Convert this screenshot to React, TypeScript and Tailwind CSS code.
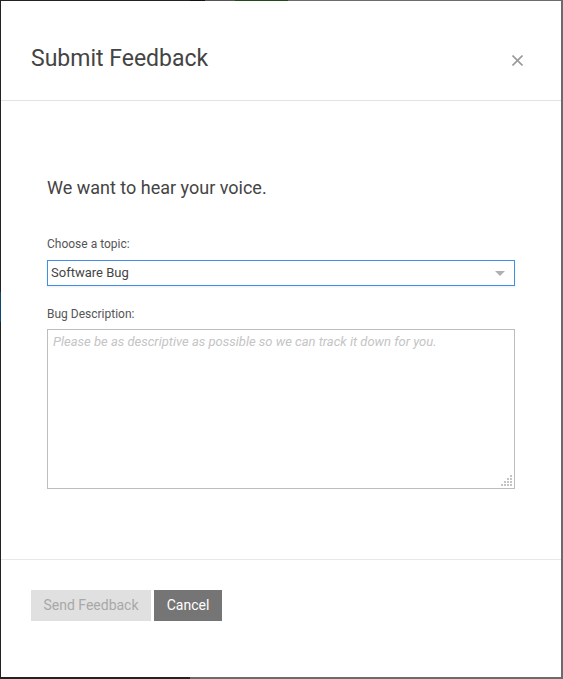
import React from "react";

function Grip() {
  const dots: [number, number][] = [];
  for (let r = 0; r < 4; r++) {
    for (let c = 3 - r; c < 4; c++) {
      dots.push([c * 3, r * 3]);
    }
  }
  return (
    <svg className="absolute right-[2px] bottom-[2px]" width="12" height="12" viewBox="0 0 12 12">
      {dots.map(([x, y], i) => (
        <rect key={i} x={x} y={y} width="2" height="2" fill="#c4c4c4" />
      ))}
    </svg>
  );
}

export default function App() {
  return (
    <div
      className="relative w-[563px] h-[679px] overflow-hidden"
      style={{ fontFamily: "Roboto, 'Noto Sans', sans-serif" }}
    >
      {/* background page behind the modal */}
      <div className="absolute inset-0 flex">
        <div className="w-[190px] h-full bg-[#222222] flex flex-col">
          <div className="h-[292px]" />
          <div className="h-[30px] w-[2px] bg-[#0b4a6e]" />
        </div>
        <div className="flex-1 h-full bg-[#6b6b6b] flex">
          <div className="w-[15px] h-[2px] bg-[#111]" />
          <div className="w-[30px] h-[2px] bg-[#555]" />
          <div className="w-[53px] h-[2px] bg-[#1d4a1d]" />
        </div>
      </div>

      {/* modal */}
      <div className="absolute left-px top-px w-[560px] h-[676px] bg-white flex flex-col">
        <div className="h-[100px] shrink-0 border-b border-[#e3e3e3] flex items-start justify-between pl-[30px] pr-[38px] pt-[40px]">
          <h1 className="text-[23px] leading-[36px] text-[#444444] font-normal">Submit Feedback</h1>
          <button className="mt-[14px] text-[#9a9a9a] leading-none">
            <svg width="11" height="11" viewBox="0 0 11 11">
              <path d="M0.5 0.5 L10.5 10.5 M10.5 0.5 L0.5 10.5" stroke="currentColor" strokeWidth="1.6" />
            </svg>
          </button>
        </div>

        <div className="h-[459px] shrink-0 border-b border-[#e8e8e8] px-[46px] pt-[75px] flex flex-col">
          <p className="text-[18px] leading-[24px] text-[#444444]">We want to hear your voice.</p>
          <label className="mt-[36px] text-[12px] leading-[16px] text-[#555555]">Choose a topic:</label>
          <div className="mt-[8px] h-[26px] w-[468px] border border-[#3d8fe8] flex items-center justify-between pl-[3px] pr-[9px] shadow-[0_1px_2px_rgba(0,0,0,0.08)]">
            <span className="text-[13px] text-[#444444]">Software Bug</span>
            <svg width="10" height="5" viewBox="0 0 10 5">
              <path d="M0 0 L10 0 L5 5 Z" fill="#b0b0b0" />
            </svg>
          </div>
          <label className="mt-[20px] text-[12px] leading-[16px] text-[#555555]">Bug Description:</label>
          <div className="relative mt-[7px] h-[160px] w-[468px]">
            <textarea
              className="block h-full w-full resize-none border border-[#bdbdbd] px-[5px] pt-[3px] text-[13px] leading-[18px] text-[#444] placeholder:text-[#c4c4c4] placeholder:italic outline-none"
              placeholder="Please be as descriptive as possible so we can track it down for you."
            />
            <Grip />
          </div>
        </div>

        <div className="flex pl-[30px] pt-[30px] gap-[3px]">
          <button className="w-[120px] h-[31px] bg-[#e0e0e0] text-[#a8a8a8] text-[14px]">Send Feedback</button>
          <button className="w-[68px] h-[31px] bg-[#757575] text-white text-[14px]">Cancel</button>
        </div>
      </div>
    </div>
  );
}
